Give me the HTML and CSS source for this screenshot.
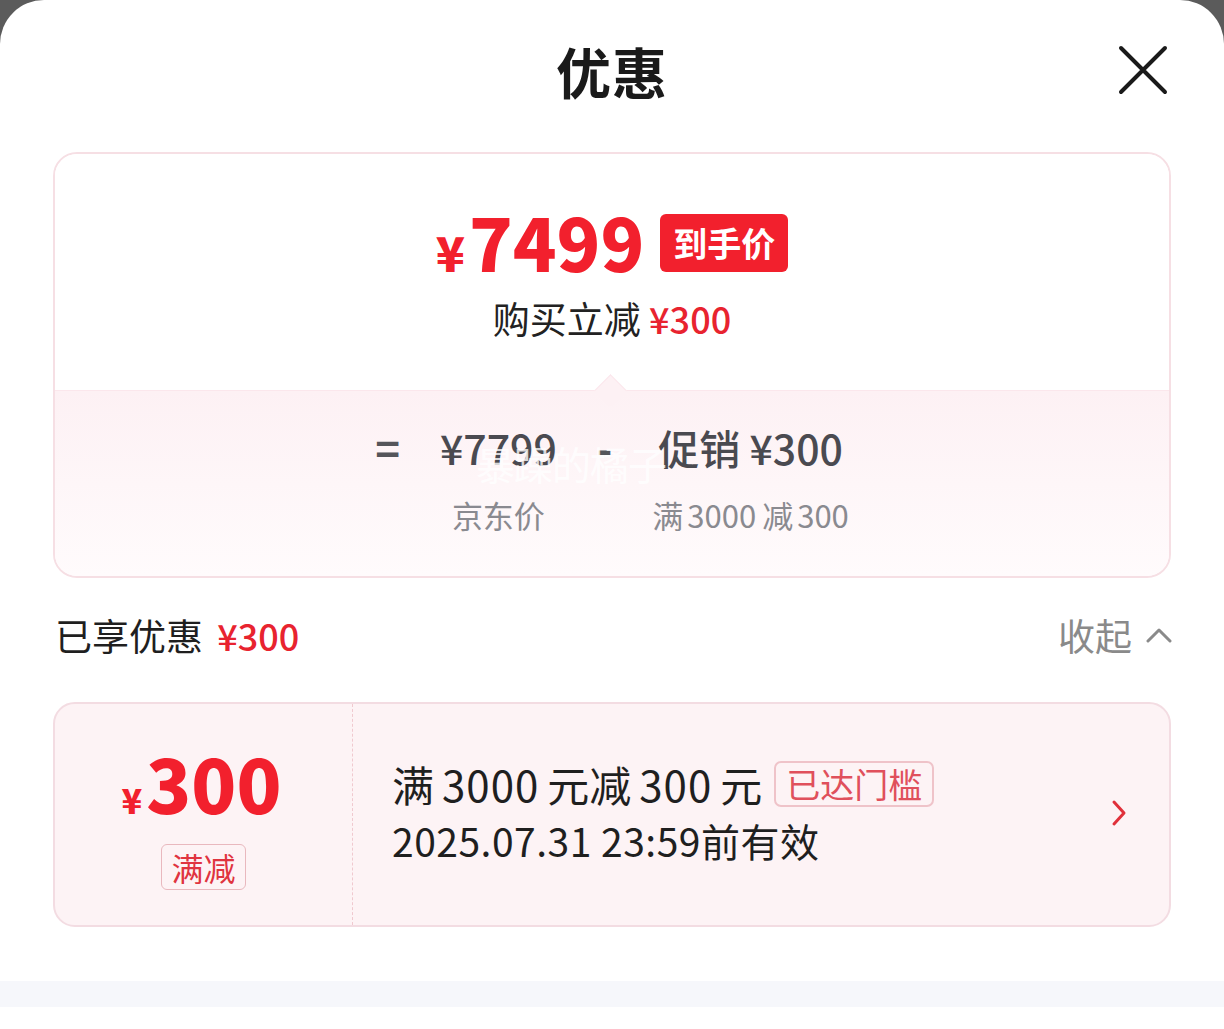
FILE: index.html
```html
<!DOCTYPE html>
<html lang="zh-CN">
<head>
<meta charset="utf-8">
<title>优惠</title>
<link rel="stylesheet" href="styles.css">
</head>
<body>
<div class="sheet">
  <header class="header">
    <span></span>
    <h1 class="title">优惠</h1>
    <button class="close" aria-label="关闭">
      <svg width="50" height="50" viewBox="0 0 50 50"><path d="M3 3 L47 47 M47 3 L3 47" stroke="#1a1a1a" stroke-width="4" stroke-linecap="round" fill="none"/></svg>
    </button>
  </header>

  <section class="summary">
    <div class="summary-top">
      <div class="final-row">
        <span class="final-price"><span class="yen">¥</span>7499</span>
        <span class="final-badge">到手价</span>
      </div>
      <div class="cut-row">购买立减 <span class="red">¥300</span></div>
    </div>
    <div class="summary-bottom">
      <div class="formula">
        <span class="op">=</span>
        <div class="term">
          <div class="term-value">¥7799</div>
          <div class="term-label">京东价</div>
        </div>
        <span class="op minus">-</span>
        <div class="term">
          <div class="term-value">促销 ¥300</div>
          <div class="term-label">满<span class="gap">3000</span>减<span class="gap-l">300</span></div>
        </div>
      </div>
      <div class="watermark">暴躁的橘子</div>
    </div>
  </section>

  <div class="enjoy-row">
    <div class="enjoy-left">已享优惠 <span class="red big">¥300</span></div>
    <div class="collapse">收起
      <svg width="26" height="16" viewBox="0 0 26 16"><path d="M2 14 L13 3 L24 14" stroke="#8a8a8a" stroke-width="3" fill="none" stroke-linecap="round" stroke-linejoin="round"/></svg>
    </div>
  </div>

  <section class="coupon">
    <div class="coupon-left">
      <div class="coupon-amount"><span class="c-yen">¥</span>300</div>
      <span class="coupon-type">满减</span>
    </div>
    <div class="coupon-right">
      <div class="coupon-info">
        <div class="coupon-title"><span>满</span><span class="num">3000</span><span>元减</span><span class="num">300</span><span>元</span><span class="reached">已达门槛</span></div>
        <div class="coupon-date">2025.07.31 23:59前有效</div>
      </div>
      <svg class="chev" width="16" height="28" viewBox="0 0 16 28"><path d="M3 3 L13 14 L3 25" stroke="#e0303a" stroke-width="3" fill="none" stroke-linecap="round" stroke-linejoin="round"/></svg>
    </div>
  </section>

  <div class="band"></div>
</div>
</body>
</html>
```

FILE: styles.css
```css
* { box-sizing: border-box; }
html, body { margin: 0; padding: 0; }
body {
  background: #5b5b5b;
  font-family: "Noto Sans CJK SC", "Noto Sans", sans-serif;
  color: #1f1f1f;
}
.sheet {
  background: #fff;
  border-radius: 44px 44px 0 0;
  height: 1029px;
  display: flex;
  flex-direction: column;
  overflow: hidden;
}
.header {
  height: 140px;
  display: grid;
  grid-template-columns: 1fr auto 1fr;
  align-items: center;
  padding: 0 56px 0 56px;
}
.title {
  margin: 0;
  font-size: 55px;
  font-weight: 700;
  color: #1a1a1a;
  letter-spacing: 1px;
  line-height: 1;
}
.close {
  justify-self: end;
  background: none;
  border: 0;
  padding: 0;
  display: flex;
}
.summary {
  margin: 12px 53px 0;
  border: 2px solid #f6dfe4;
  border-radius: 24px;
  overflow: hidden;
}
.summary-top {
  padding: 54px 0 48px;
  display: flex;
  flex-direction: column;
  align-items: center;
  background: #fff;
}
.final-row {
  display: flex;
  align-items: center;
  gap: 16px;
  height: 76px;
}
.final-price {
  color: #f2202d;
  font-weight: 800;
  font-size: 72px;
  line-height: 76px;
  letter-spacing: 0;
  font-family: "Noto Sans CJK SC", sans-serif;
}
.final-price .yen {
  font-size: 48px;
  margin-right: 4px;
}
.final-badge {
  background: #f2202d;
  color: #fff;
  font-weight: 700;
  font-size: 34px;
  line-height: 58px;
  height: 58px;
  padding: 0 13px;
  border-radius: 6px;
  margin-top: -6px;
}
.cut-row {
  margin-top: 10px;
  font-size: 37px;
  line-height: 48px;
  color: #222;
}
.red { color: #e8232f; font-weight: 500; font-size: 36px; }
.summary-bottom {
  position: relative;
  background: linear-gradient(#fdf1f4, #fffbfc);
  border-top: 1px solid #fbe7ec;
  padding: 30px 0 41px;
}
.summary-bottom::before {
  content: "";
  position: absolute;
  left: 50%;
  top: -12px;
  width: 22px;
  height: 22px;
  margin-left: -13px;
  background: #fdf1f4;
  border-left: 1px solid #fbe7ec;
  border-top: 1px solid #fbe7ec;
  transform: rotate(45deg);
}
.formula {
  display: flex;
  justify-content: center;
  align-items: flex-start;
  gap: 40px;
}
.op {
  font-size: 42px;
  line-height: 52px;
  font-weight: 700;
  color: #55555a;
}
.term { display: flex; flex-direction: column; align-items: center; }
.term-value {
  font-size: 41px;
  line-height: 52px;
  font-weight: 500;
  color: #4a4a50;
}
.term-label {
  margin-top: 22px;
  font-size: 31px;
  line-height: 40px;
  color: #8a8a90;
}
.term-label .gap { margin: 0 6px 0 4px; }
.term-label .gap-l { margin-left: 4px; }
.watermark {
  position: absolute;
  left: 421px;
  top: 44px;
  font-size: 39px;
  color: rgba(255,255,255,0.8);
  letter-spacing: -1px;
  pointer-events: none;
}
.enjoy-row {
  margin: 27px 52px 37px 55px;
  height: 60px;
  display: flex;
  justify-content: space-between;
  align-items: center;
}
.enjoy-left { font-size: 37px; color: #1f1f1f; }
.enjoy-left .big { margin-left: 6px; }
.collapse {
  font-size: 37px;
  color: #8a8a8a;
  display: flex;
  align-items: center;
  gap: 14px;
}
.coupon {
  margin: 0 53px;
  height: 225px;
  background: #fdf3f5;
  border: 2px solid #f3dce2;
  border-radius: 22px;
  display: flex;
}
.coupon-left {
  width: 298px;
  border-right: 1px dashed #f0c9cf;
  display: flex;
  flex-direction: column;
  align-items: center;
  justify-content: center;
  padding-top: 2px;
}
.coupon-amount {
  color: #f2202d;
  font-weight: 800;
  font-size: 74px;
  line-height: 80px;
  margin-left: -4px;
}
.c-yen { font-size: 34px; margin-right: 4px; }
.coupon-type {
  margin-top: 4px;
  border: 1px solid #e9b8be;
  border-radius: 6px;
  color: #e0343f;
  font-size: 32px;
  line-height: 44px;
  padding: 0 9px;
}
.coupon-right {
  flex: 1;
  display: flex;
  align-items: center;
  justify-content: space-between;
  padding: 0 42px 8px 39px;
}
.coupon-info { display: flex; flex-direction: column; }
.coupon-title {
  font-size: 42px;
  line-height: 54px;
  color: #1f1f1f;
  display: flex;
  align-items: center;
}
.coupon-title .num { margin: 0 8px; letter-spacing: 1px; }
.reached {
  margin-left: 12px;
  border: 2px solid #efc3c9;
  border-radius: 7px;
  color: #e0505c;
  font-size: 34px;
  line-height: 42px;
  padding: 0 10px;
}
.coupon-date {
  margin-top: 4px;
  font-size: 39px;
  line-height: 50px;
  color: #1f1f1f;
  letter-spacing: 0.5px;
}
.chev { margin-top: 4px; }
.band {
  margin-top: 54px;
  height: 26px;
  background: #f6f7fb;
}
```
